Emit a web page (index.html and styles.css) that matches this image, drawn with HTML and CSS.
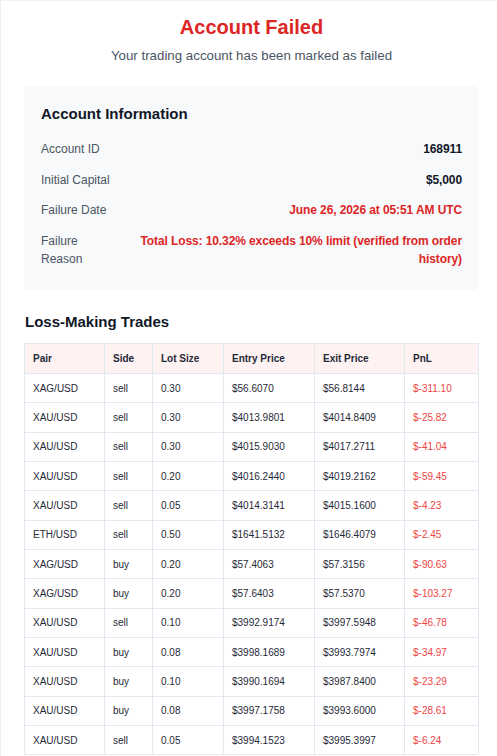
FILE: index.html
```html
<!DOCTYPE html>
<html lang="en">
<head>
<meta charset="utf-8">
<title>Account Failed</title>
<link rel="stylesheet" href="styles.css">
</head>
<body>
<div class="frame">
  <div class="mail">
    <h1 class="title">Account Failed</h1>
    <p class="subtitle">Your trading account has been marked as failed</p>

    <section class="info">
      <h2 class="info-heading">Account Information</h2>
      <div class="row"><span class="label">Account ID</span><span class="value">168911</span></div>
      <div class="row"><span class="label">Initial Capital</span><span class="value">$5,000</span></div>
      <div class="row"><span class="label">Failure Date</span><span class="value danger">June 26, 2026 at 05:51 AM UTC</span></div>
      <div class="row"><span class="label">Failure Reason</span><span class="value danger">Total Loss: 10.32% exceeds 10% limit (verified from order history)</span></div>
    </section>

    <h2 class="section-heading">Loss-Making Trades</h2>
    <table class="trades">
      <colgroup>
        <col class="c-pair"><col class="c-side"><col class="c-lot"><col class="c-entry"><col class="c-exit"><col class="c-pnl">
      </colgroup>
      <thead>
        <tr><th>Pair</th><th>Side</th><th>Lot Size</th><th>Entry Price</th><th>Exit Price</th><th>PnL</th></tr>
      </thead>
      <tbody>
        <tr><td>XAG/USD</td><td>sell</td><td>0.30</td><td>$56.6070</td><td>$56.8144</td><td class="pnl">$-311.10</td></tr>
        <tr><td>XAU/USD</td><td>sell</td><td>0.30</td><td>$4013.9801</td><td>$4014.8409</td><td class="pnl">$-25.82</td></tr>
        <tr><td>XAU/USD</td><td>sell</td><td>0.30</td><td>$4015.9030</td><td>$4017.2711</td><td class="pnl">$-41.04</td></tr>
        <tr><td>XAU/USD</td><td>sell</td><td>0.20</td><td>$4016.2440</td><td>$4019.2162</td><td class="pnl">$-59.45</td></tr>
        <tr><td>XAU/USD</td><td>sell</td><td>0.05</td><td>$4014.3141</td><td>$4015.1600</td><td class="pnl">$-4.23</td></tr>
        <tr><td>ETH/USD</td><td>sell</td><td>0.50</td><td>$1641.5132</td><td>$1646.4079</td><td class="pnl">$-2.45</td></tr>
        <tr><td>XAG/USD</td><td>buy</td><td>0.20</td><td>$57.4063</td><td>$57.3156</td><td class="pnl">$-90.63</td></tr>
        <tr><td>XAG/USD</td><td>buy</td><td>0.20</td><td>$57.6403</td><td>$57.5370</td><td class="pnl">$-103.27</td></tr>
        <tr><td>XAU/USD</td><td>sell</td><td>0.10</td><td>$3992.9174</td><td>$3997.5948</td><td class="pnl">$-46.78</td></tr>
        <tr><td>XAU/USD</td><td>buy</td><td>0.08</td><td>$3998.1689</td><td>$3993.7974</td><td class="pnl">$-34.97</td></tr>
        <tr><td>XAU/USD</td><td>buy</td><td>0.10</td><td>$3990.1694</td><td>$3987.8400</td><td class="pnl">$-23.29</td></tr>
        <tr><td>XAU/USD</td><td>buy</td><td>0.08</td><td>$3997.1758</td><td>$3993.6000</td><td class="pnl">$-28.61</td></tr>
        <tr><td>XAU/USD</td><td>sell</td><td>0.05</td><td>$3994.1523</td><td>$3995.3997</td><td class="pnl">$-6.24</td></tr>
      </tbody>
    </table>
  </div>
</div>
</body>
</html>
```

FILE: styles.css
```css
html, body {
  margin: 0;
  padding: 0;
  background: #ffffff;
  overflow: hidden;
}

body {
  font-family: "Liberation Sans", Arial, sans-serif;
  color: #111827;
}

.frame {
  width: 502px;
  border-top: 1px solid #f1f1f3;
  border-left: 1px solid #ebebf7;
  box-sizing: border-box;
}

.mail {
  padding: 13px 23px 40px 23px;
}

.title {
  margin: 0;
  text-align: center;
  font-size: 20px;
  line-height: 26px;
  font-weight: 700;
  color: #dc2626;
}

.subtitle {
  margin: 7px 0 0;
  text-align: center;
  font-size: 13.3px;
  line-height: 18px;
  color: #4b5563;
}

.info {
  margin-top: 21px;
  background: #f8f9fb;
  border-radius: 6px;
  padding: 17px 17px 16px 17px;
}

.info-heading {
  margin: 0 0 9px;
  font-size: 15px;
  line-height: 22px;
  font-weight: 700;
  color: #111827;
}

.row {
  display: flex;
  justify-content: space-between;
  padding: 6.25px 0;
  font-size: 12px;
  line-height: 18px;
}

.label {
  color: #4b5563;
}

.value {
  font-weight: 700;
  text-align: right;
  color: #111827;
  letter-spacing: -0.1px;
}

.value.danger {
  color: #dc2626;
}

.section-heading {
  margin: 21px 0 10px 1px;
  font-size: 15px;
  line-height: 22px;
  font-weight: 700;
  color: #111827;
}

.trades {
  width: 100%;
  table-layout: fixed;
  border-collapse: collapse;
  font-size: 10px;
  color: #1f2937;
}

.c-pair { width: 80px; }
.c-side { width: 48px; }
.c-lot { width: 71px; }
.c-entry { width: 91px; }
.c-exit { width: 90px; }
.c-pnl { width: 74px; }

.trades th,
.trades td {
  border: 1px solid #e2e8f0;
  text-align: left;
  padding: 0 8px;
  height: 29px;
  white-space: nowrap;
}

.trades th {
  background: #fef2f2;
  font-weight: 700;
  color: #1f2937;
}

.trades td {
  height: 28.33px;
}

.trades .pnl {
  color: #ef4444;
}
```
